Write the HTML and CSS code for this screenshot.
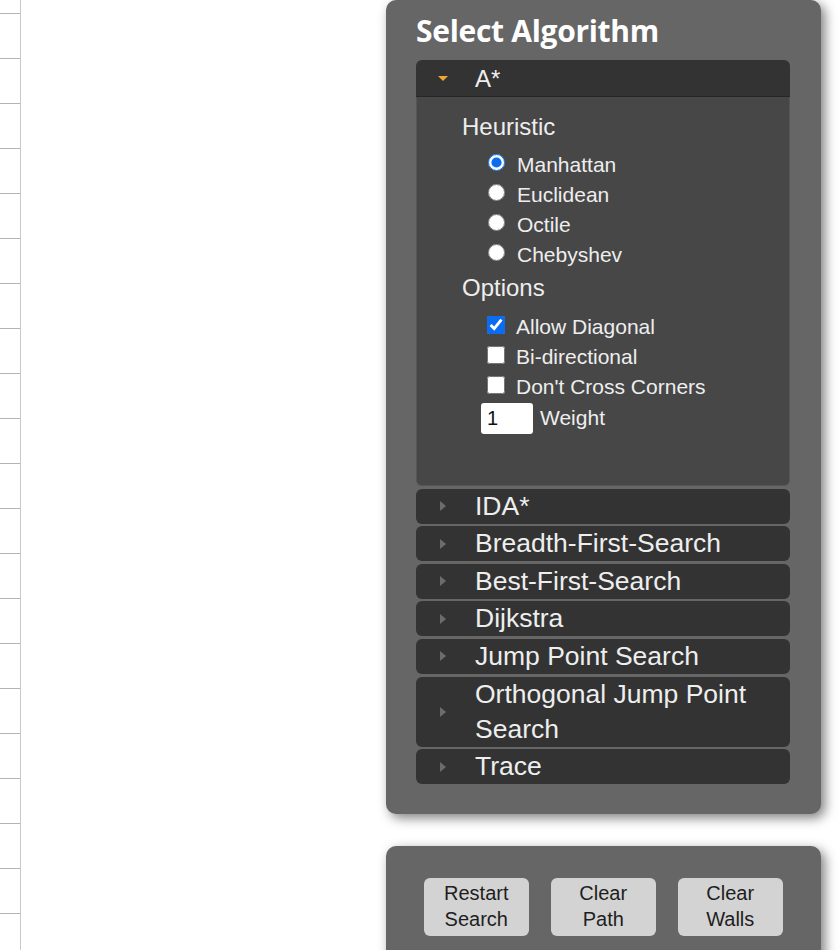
FILE: index.html
```html
<!DOCTYPE html>
<html lang="en">
<head>
<meta charset="utf-8">
<title>PathFinding – Select Algorithm</title>
<link rel="stylesheet" href="styles.css">
</head>
<body>
<div class="page">
  <div class="grid"></div>
  <aside class="controls">
    <section class="panel algo-panel">
      <h3 class="panel-title">Select Algorithm</h3>
      <div class="accordion">
        <div class="acc-item open">
          <div class="acc-header active"><span class="tri down"></span><span class="acc-label">A*</span></div>
          <div class="acc-content">
            <h4 class="opt-title">Heuristic</h4>
            <div class="radio-list">
              <label class="opt-row"><input type="radio" name="astar_heuristic" checked><span>Manhattan</span></label>
              <label class="opt-row"><input type="radio" name="astar_heuristic"><span>Euclidean</span></label>
              <label class="opt-row"><input type="radio" name="astar_heuristic"><span>Octile</span></label>
              <label class="opt-row"><input type="radio" name="astar_heuristic"><span>Chebyshev</span></label>
            </div>
            <h4 class="opt-title options">Options</h4>
            <div class="check-list">
              <label class="opt-row"><input type="checkbox" checked><span>Allow Diagonal</span></label>
              <label class="opt-row"><input type="checkbox"><span>Bi-directional</span></label>
              <label class="opt-row"><input type="checkbox"><span>Don't Cross Corners</span></label>
              <label class="opt-row weight-row"><input type="text" class="weight" value="1"><span>Weight</span></label>
            </div>
          </div>
        </div>
        <div class="acc-header"><span class="tri right"></span><span class="acc-label">IDA*</span></div>
        <div class="acc-header"><span class="tri right"></span><span class="acc-label">Breadth-First-Search</span></div>
        <div class="acc-header"><span class="tri right"></span><span class="acc-label">Best-First-Search</span></div>
        <div class="acc-header"><span class="tri right"></span><span class="acc-label">Dijkstra</span></div>
        <div class="acc-header"><span class="tri right"></span><span class="acc-label">Jump Point Search</span></div>
        <div class="acc-header"><span class="tri right"></span><span class="acc-label">Orthogonal Jump Point Search</span></div>
        <div class="acc-header"><span class="tri right"></span><span class="acc-label">Trace</span></div>
      </div>
    </section>
    <section class="panel actions-panel">
      <button class="action">Restart<br>Search</button>
      <button class="action">Clear<br>Path</button>
      <button class="action">Clear<br>Walls</button>
    </section>
  </aside>
</div>
</body>
</html>
```
FILE: styles.css
```css
html, body {
  margin: 0;
  padding: 0;
  background: #ffffff;
}
body {
  width: 840px;
  height: 950px;
  overflow: hidden;
  font-family: "Liberation Sans", Arial, sans-serif;
}
.page {
  display: flex;
  justify-content: space-between;
  height: 950px;
  padding-right: 19px;
  box-sizing: border-box;
}
.grid {
  width: 20px;
  height: 950px;
  border-right: 1px solid #c8c8c8;
  background-image: repeating-linear-gradient(180deg,
    transparent 0, transparent 13px,
    #b4b4b4 13px, #b4b4b4 14px,
    transparent 14px, transparent 45px);
}
.controls {
  width: 435px;
  display: flex;
  flex-direction: column;
  gap: 32px;
}
.panel {
  background: #666666;
  border-radius: 10px;
  box-shadow: 4px 4px 12px rgba(0, 0, 0, 0.5);
  box-sizing: border-box;
}
.algo-panel {
  padding: 10px 31px 30px 30px;
}
.panel-title {
  margin: 0 0 9px 0;
  font-family: "Open Sans", "Liberation Sans", sans-serif;
  font-weight: 700;
  font-size: 30px;
  letter-spacing: -0.3px;
  line-height: 41px;
  color: #ffffff;
}
.accordion {
  display: flex;
  flex-direction: column;
  gap: 2.6px;
}
.acc-header {
  display: flex;
  align-items: center;
  background: #333333;
  color: #eeeeee;
  border-radius: 6px;
  padding-left: 21px;
  font-size: 26.5px;
  line-height: 35px;
  min-height: 35px;
}
.acc-header.active {
  border-radius: 6px 6px 0 0;
  border-bottom: 1px solid #262626;
  font-size: 24px;
  padding-top: 1px;
}
.tri {
  flex: 0 0 12px;
  height: 10px;
  margin-right: 26px;
  display: flex;
  align-items: center;
  justify-content: center;
}
.tri.right::before {
  content: "";
  border-left: 6px solid #6c6c6c;
  border-top: 5px solid transparent;
  border-bottom: 5px solid transparent;
}
.tri.down::before {
  content: "";
  border-top: 5px solid #f2a534;
  border-left: 5.5px solid transparent;
  border-right: 5.5px solid transparent;
}
.acc-content {
  background: #474747;
  border: 1px solid #555555;
  border-top: none;
  border-radius: 0 0 6px 6px;
  padding: 16px 0 51px 45px;
  color: #eeeeee;
}
.opt-title {
  margin: 0;
  font-weight: 400;
  font-size: 24px;
  line-height: 28px;
}
.opt-title.options {
  margin-top: 4px;
}
.radio-list {
  margin-top: 9px;
  padding-left: 26px;
}
.check-list {
  margin-top: 10px;
  padding-left: 19px;
}
.opt-row {
  display: flex;
  align-items: center;
  height: 30px;
  font-size: 21px;
  line-height: 30px;
  color: #eeeeee;
}
.radio-list input[type="radio"] {
  width: 17px;
  height: 17px;
  margin: 0 12px 5px 0;
  accent-color: #0a6cf0;
}
.check-list input[type="checkbox"] {
  width: 18px;
  height: 18px;
  margin: 0 11px 5px 6px;
  accent-color: #0a6cf0;
}
.weight-row {
  height: 32px;
  line-height: 32px;
}
.weight {
  width: 52px;
  height: 31px;
  box-sizing: border-box;
  margin: 0 7px 0 0;
  padding: 0 6px;
  border: none;
  border-radius: 3px;
  background: #ffffff;
  color: #111111;
  font-family: "Liberation Sans", Arial, sans-serif;
  font-size: 20px;
}
.actions-panel {
  display: flex;
  gap: 22.5px;
  padding: 32px 30px 40px 38px;
}
.action {
  width: 104.5px;
  padding: 2px 0 4px;
  border: none;
  border-radius: 6px;
  background: #d3d3d3;
  color: #1e1e1e;
  font-family: "Liberation Sans", Arial, sans-serif;
  font-size: 20px;
  line-height: 26px;
  text-align: center;
}
```
